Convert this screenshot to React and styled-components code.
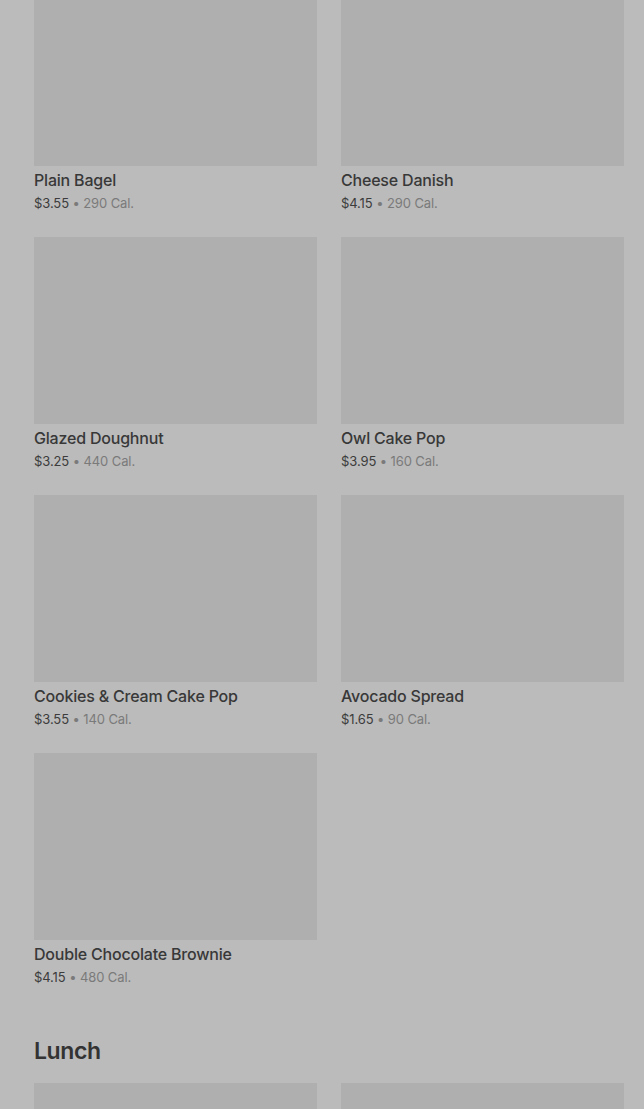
import React from "react";
import styled, { createGlobalStyle } from "styled-components";

const Global = createGlobalStyle`
  html, body { margin: 0; padding: 0; background: #bbbbbb; overflow: hidden; }
  body { font-family: Inter, Roboto, "Liberation Sans", Arial, sans-serif; }
`;

const Page = styled.div`
  width: 644px;
  height: 1109px;
  overflow: hidden;
  background: #bbbbbb;
`;

const Content = styled.div`
  margin-top: -21px;
  padding: 0 20px 0 34px;
`;

const Section = styled.section`
  display: flex;
  flex-direction: column;
  margin-bottom: 49px;
`;

const Heading = styled.h2`
  margin: 0 0 16px;
  font-size: 23px;
  line-height: 32px;
  font-weight: 600;
  letter-spacing: -0.4px;
  color: #333333;
`;

const Grid = styled.div`
  display: grid;
  grid-template-columns: 283px 283px;
  column-gap: 24px;
  row-gap: 25px;
`;

const Card = styled.div`
  display: flex;
  flex-direction: column;
`;

const Thumb = styled.div`
  height: 187px;
  background: #afafaf;
`;

const Name = styled.div`
  margin-top: 4px;
  font-size: 16px;
  line-height: 20px;
  font-weight: 500;
  letter-spacing: -0.2px;
  color: #383838;
`;

const Meta = styled.div`
  margin-top: 4px;
  font-size: 13px;
  line-height: 18px;
  font-weight: 400;
  letter-spacing: -0.1px;
  color: #7a7a7a;
`;

const Price = styled.span`
  color: #3c3c3c;
`;

const breakfast = [
  ["Plain Bagel", "$3.55", "290 Cal."],
  ["Cheese Danish", "$4.15", "290 Cal."],
  ["Glazed Doughnut", "$3.25", "440 Cal."],
  ["Owl Cake Pop", "$3.95", "160 Cal."],
  ["Cookies & Cream Cake Pop", "$3.55", "140 Cal."],
  ["Avocado Spread", "$1.65", "90 Cal."],
  ["Double Chocolate Brownie", "$4.15", "480 Cal."],
];

const lunch = [
  ["Turkey & Pesto Panini", "$6.95", "520 Cal."],
  ["Ham & Swiss Panini", "$6.45", "500 Cal."],
];

function Item({ name, price, cal }) {
  return (
    <Card>
      <Thumb />
      <Name>{name}</Name>
      <Meta>
        <Price>{price}</Price> • {cal}
      </Meta>
    </Card>
  );
}

export default function App() {
  return (
    <Page>
      <Global />
      <Content>
        <Section>
          <Grid>
            {breakfast.map(([n, p, c]) => (
              <Item key={n} name={n} price={p} cal={c} />
            ))}
          </Grid>
        </Section>
        <Section>
          <Heading>Lunch</Heading>
          <Grid>
            {lunch.map(([n, p, c]) => (
              <Item key={n} name={n} price={p} cal={c} />
            ))}
          </Grid>
        </Section>
      </Content>
    </Page>
  );
}
